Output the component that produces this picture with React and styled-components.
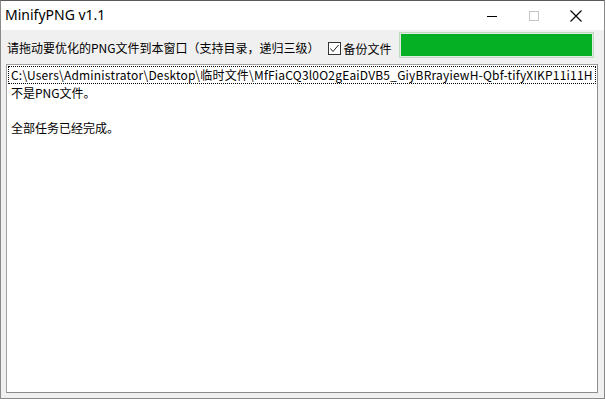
import React from 'react';
import styled, { createGlobalStyle } from 'styled-components';

const GlobalStyle = createGlobalStyle`
  html, body {
    margin: 0;
    padding: 0;
    background: #ffffff;
  }
  * {
    box-sizing: border-box;
  }
`;

const UI_FONT = `"Noto Sans", "Noto Sans CJK SC", sans-serif`;
const CJK_FONT = `"Noto Sans CJK SC", "Noto Sans", sans-serif`;

const StyledWindow = styled.div`
  width: 605px;
  height: 399px;
  display: flex;
  flex-direction: column;
  border-top: 1px solid #5a5a5a;
  border-left: 1px solid #8a8a8a;
  border-right: 1px solid #8a8a8a;
  border-bottom: 1px solid #8a8a8a;
  background: #f0f0f0;
  overflow: hidden;
`;

const TitleBar = styled.div`
  height: 29px;
  flex: none;
  display: flex;
  align-items: center;
  padding-right: 6px;
  background: #ffffff;

  .title {
    flex: 1;
    padding-left: 4px;
    padding-bottom: 2px;
    font-family: ${UI_FONT};
    font-size: 14px;
    color: #000;
  }
`;

const CaptionButton = styled.div`
  width: ${({ w }) => w || 44}px;
  height: 29px;
  display: flex;
  align-items: center;
  justify-content: center;
  color: ${({ disabled }) => (disabled ? '#c4c4c4' : '#000')};
`;

const Client = styled.div`
  flex: 1;
  display: flex;
  flex-direction: column;
  padding: 2px 6px 5px 5px;
  min-height: 0;
`;

const Toolbar = styled.div`
  height: 32px;
  flex: none;
  display: flex;
  align-items: flex-start;
  font-family: ${CJK_FONT};
  font-size: 12px;
  color: #000;

  .hint {
    margin-top: 7px;
    margin-left: 1px;
    white-space: nowrap;
  }
`;

const CheckLabel = styled.label`
  display: flex;
  align-items: center;
  gap: 3px;
  margin-top: 8px;
  margin-left: 8px;
  white-space: nowrap;
`;

const CheckBox = styled.span`
  width: 13px;
  height: 13px;
  border: 1px solid #333333;
  background: #ffffff;
  display: flex;
  align-items: center;
  justify-content: center;
`;

const Progress = styled.div`
  margin-left: auto;
  margin-right: 4px;
  width: 195px;
  height: 26px;
  border: 1px solid #bcdcbc;
  background: #e6e6e6;
  padding: 1px;

  .fill {
    height: 100%;
    background: #06b025;
  }
`;

const LogBox = styled.div`
  flex: 1;
  background: #ffffff;
  border-top: 1px solid #a0a0a0;
  border-left: 1px solid #a0a0a0;
  border-right: 1px solid #8c8c8c;
  border-bottom: 1px solid #8c8c8c;
  padding: 1px 1px;
  overflow: hidden;
  font-family: ${CJK_FONT};
  font-size: 12px;
  line-height: 17.6px;
  color: #000;
`;

const LogLine = styled.div`
  height: 17.6px;
  white-space: nowrap;
  overflow: hidden;
  padding-left: 2px;
  letter-spacing: ${({ focused }) => (focused ? '0.2px' : '0')};
  border: 1px dotted ${({ focused }) => (focused ? '#000' : 'transparent')};
  border-width: ${({ focused }) => (focused ? '1px' : '0 0 0 1px')};
  line-height: ${({ focused }) => (focused ? '15.6px' : '17.6px')};
`;

const lines = [
  'C:\\Users\\Administrator\\Desktop\\临时文件\\MfFiaCQ3l0O2gEaiDVB5_GiyBRrayiewH-Qbf-tifyXIKP11i11H',
  '不是PNG文件。',
  '',
  '全部任务已经完成。',
];

const App = () => (
  <>
    <GlobalStyle />
    <StyledWindow>
      <TitleBar>
        <span className="title">MinifyPNG v1.1</span>
        <CaptionButton w={44}>
          <svg width="10" height="10" viewBox="0 0 10 10">
            <path d="M0 5.5h10" stroke="currentColor" strokeWidth="1" />
          </svg>
        </CaptionButton>
        <CaptionButton w={40} disabled>
          <svg width="10" height="10" viewBox="0 0 10 10">
            <rect x="0.5" y="0.5" width="9" height="9" fill="none" stroke="currentColor" strokeWidth="1" />
          </svg>
        </CaptionButton>
        <CaptionButton w={44}>
          <svg width="12" height="12" viewBox="0 0 12 12">
            <path d="M0.5 0.5L11.5 11.5M11.5 0.5L0.5 11.5" stroke="currentColor" strokeWidth="1.1" />
          </svg>
        </CaptionButton>
      </TitleBar>
      <Client>
        <Toolbar>
          <span className="hint">请拖动要优化的PNG文件到本窗口（支持目录，递归三级）</span>
          <CheckLabel>
            <CheckBox>
              <svg width="11" height="11" viewBox="0 0 11 11">
                <path d="M1.5 5.5L4 8.5L9.5 2" fill="none" stroke="#222" strokeWidth="1" />
              </svg>
            </CheckBox>
            备份文件
          </CheckLabel>
          <Progress>
            <div className="fill" style={{ width: '100%' }} />
          </Progress>
        </Toolbar>
        <LogBox>
          {lines.map((text, i) => (
            <LogLine key={i} focused={i === 0}>
              {text}
            </LogLine>
          ))}
        </LogBox>
      </Client>
    </StyledWindow>
  </>
);

export default App;
